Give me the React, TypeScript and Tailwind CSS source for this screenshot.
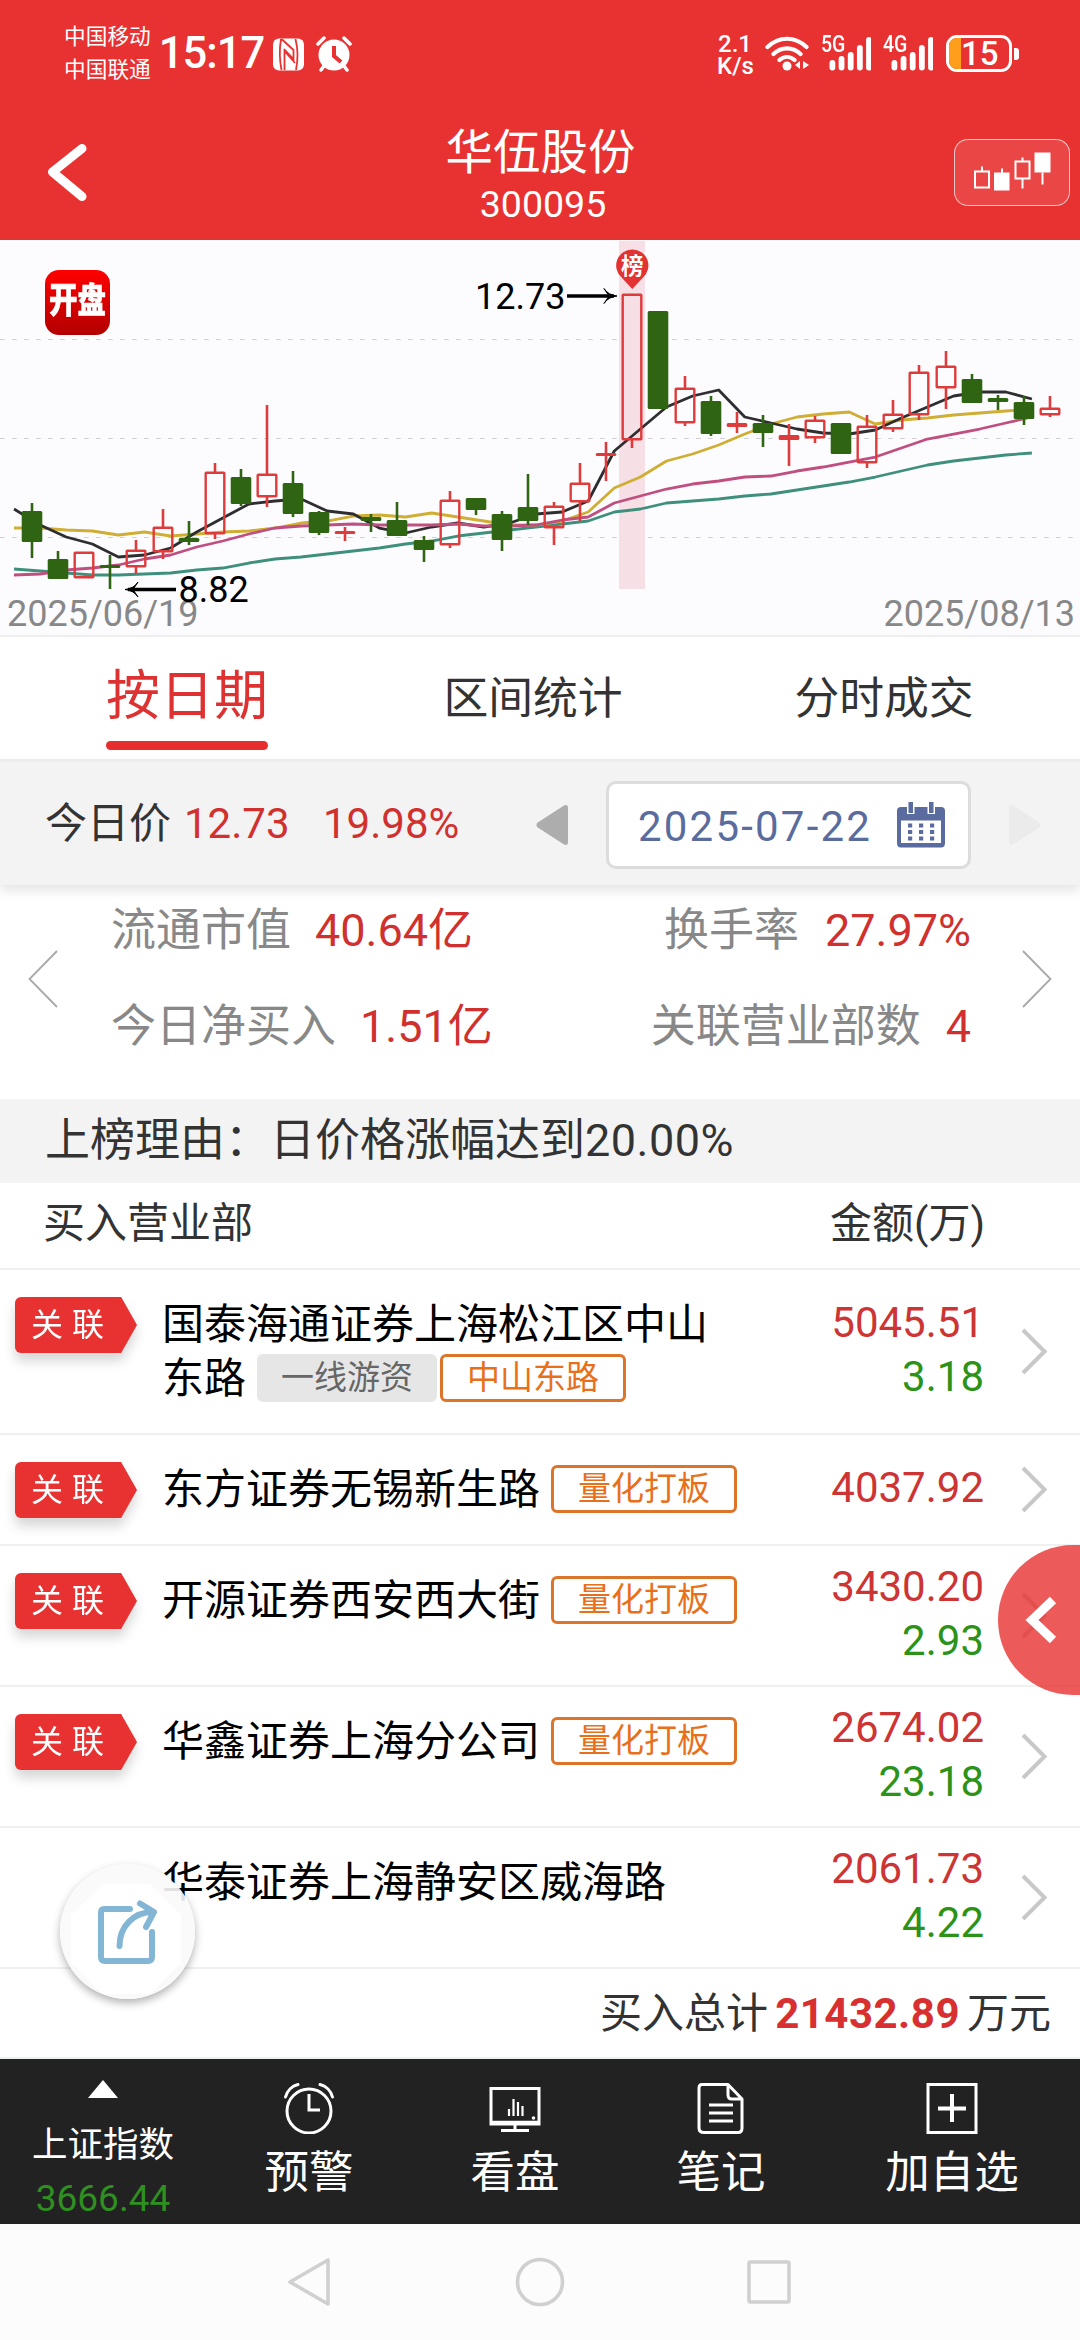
import { clsx } from "clsx";

type Candle = { up: boolean; high: number; top: number; bottom: number; low: number };

const STEP = 26.1;

const c = (side: "r" | "g", high: number, top: number, bottom: number, low: number): Candle => ({
  up: side === "r",
  high,
  top,
  bottom,
  low,
});

const candles: Candle[] = [
  c("g", 503, 511, 542, 558),
  c("g", 551, 559, 579, 579),
  c("r", 552, 552, 578, 578),
  c("g", 555, 565, 568, 589),
  c("r", 540, 550, 567, 573),
  c("r", 509, 527, 552, 559),
  c("g", 521, 538, 542, 545),
  c("r", 463, 472, 534, 539),
  c("g", 469, 477, 504, 506),
  c("r", 405, 474, 497, 507),
  c("g", 471, 483, 514, 517),
  c("g", 511, 512, 533, 535),
  c("r", 527, 531, 534, 541),
  c("g", 514, 517, 521, 532),
  c("g", 502, 520, 536, 536),
  c("g", 536, 540, 550, 562),
  c("r", 491, 500, 545, 548),
  c("g", 498, 498, 510, 515),
  c("g", 511, 514, 540, 551),
  c("g", 474, 507, 521, 525),
  c("r", 502, 506, 528, 545),
  c("r", 463, 483, 502, 521),
  c("r", 442, 453, 456, 481),
  c("r", 294, 294, 440, 448),
  c("g", 311, 311, 409, 409),
  c("r", 376, 388, 423, 426),
  c("g", 396, 401, 434, 436),
  c("r", 412, 423, 427, 433),
  c("g", 415, 423, 433, 447),
  c("r", 424, 435, 440, 466),
  c("r", 416, 420, 438, 443),
  c("g", 423, 423, 454, 454),
  c("r", 415, 426, 463, 468),
  c("r", 400, 414, 429, 432),
  c("r", 365, 372, 415, 420),
  c("r", 351, 366, 388, 409),
  c("g", 374, 379, 403, 403),
  c("g", 395, 398, 402, 410),
  c("g", 396, 402, 419, 425),
  c("r", 396, 408, 415, 417),
];

const averages = [
  {
    color: "#3f8f7d",
    values: [569, 571, 573, 575, 575, 574, 573, 570, 568, 563, 559, 557, 554, 551, 548, 544, 541, 536, 533, 530, 527, 524, 521, 512, 509, 503, 501, 499, 496, 494, 490, 486, 482, 477, 471, 465, 461, 458, 455, 453],
  },
  {
    color: "#cfae33",
    values: [528, 528, 530, 531, 535, 532, 536, 534, 532, 531, 528, 523, 521, 516, 515, 517, 513, 517, 521, 525, 525, 521, 512, 488, 477, 461, 454, 445, 434, 424, 417, 414, 412, 424, 420, 418, 415, 413, 411, 409],
  },
  {
    color: "#2e2e30",
    values: [509, 525, 537, 544, 557, 555, 548, 532, 518, 504, 501, 499, 511, 514, 528, 533, 527, 523, 527, 523, 514, 512, 501, 451, 429, 407, 396, 390, 417, 423, 429, 433, 434, 430, 418, 407, 396, 392, 392, 399],
  },
  {
    color: "#c04f80",
    values: [575, 574, 570, 568, 565, 559, 555, 547, 541, 534, 528, 526, 525, 524, 525, 525, 525, 524, 526, 526, 525, 520, 517, 503, 496, 489, 484, 481, 477, 476, 471, 467, 462, 457, 448, 439, 434, 429, 423, 417],
  },
];

const linePoints = (values: number[]) => values.map((y, i) => `${(14 + i * STEP).toFixed(1)},${y}`).join(" ");

type Seat = {
  linked: boolean;
  name: string;
  tags: { label: string; muted?: boolean }[];
  buy: string;
  sell?: string;
  height: string;
};

const seats: Seat[] = [
  {
    linked: true,
    name: "国泰海通证券上海松江区中山东路",
    tags: [{ label: "一线游资", muted: true }, { label: "中山东路" }],
    buy: "5045.51",
    sell: "3.18",
    height: "h-[165px]",
  },
  { linked: true, name: "东方证券无锡新生路", tags: [{ label: "量化打板" }], buy: "4037.92", height: "h-[111px]" },
  { linked: true, name: "开源证券西安西大街", tags: [{ label: "量化打板" }], buy: "3430.20", sell: "2.93", height: "h-[141px]" },
  { linked: true, name: "华鑫证券上海分公司", tags: [{ label: "量化打板" }], buy: "2674.02", sell: "23.18", height: "h-[141px]" },
  { linked: false, name: "华泰证券上海静安区威海路", tags: [], buy: "2061.73", sell: "4.22", height: "h-[141px]" },
];

const SignalBars = ({ label }: { label: string }) => (
  <div className="relative">
    <span className="absolute -left-px -top-[4px] origin-left scale-x-85 text-[23px] font-medium leading-[28px]">{label}</span>
    <svg width="49" height="36" viewBox="0 0 49 36" fill="#fff">
      {[25, 21, 17, 10, 2].map((y, i) => (
        <rect key={i} x={7.5 + i * 9.15} y={y} width="5.8" height={35.5 - y} rx="2.9" />
      ))}
    </svg>
  </div>
);

const StatusBar = () => (
  <div className="flex h-[108px] items-start justify-between pl-[64px] pr-[61px] pt-[20px] text-white">
    <div className="flex">
      <div className="text-[21.7px] leading-[33px]">
        <p>中国移动</p>
        <p>中国联通</p>
      </div>
      <span className="ml-[8px] mt-[9px] w-[110px] shrink-0 text-[43.500px] font-medium leading-[50px] tracking-[-1px]">15:17</span>
      <svg className="ml-[4px] mt-[18px]" width="31" height="33" viewBox="0 0 31 33">
        <rect x="0" y="0.500" width="31" height="32" rx="6" fill="#fff" />
        <path d="M8 1C6.500 10 6.500 22 8.500 32M11.500 32V13L22 25M8.500 1L20.500 12V21L11 11M23 32C24.800 23 24.800 10 22.500 1" fill="none" stroke="#e83131" strokeWidth="1.800" />
      </svg>
      <svg className="ml-[12px] mt-[16px]" width="36" height="36" viewBox="0 0 36 36">
        <circle cx="18" cy="19" r="15.500" fill="#fff" />
        <path d="M2 8L8 2M34 8L28 2M8 30L5 34M28 30L31 34" stroke="#fff" strokeWidth="3.500" strokeLinecap="round" />
        <path d="M18 10V20L25 26" fill="none" stroke="#e83131" strokeWidth="4" />
      </svg>
    </div>
    <div className="flex items-start">
      <div className="mt-[13px] w-[36px] text-center text-[24px] font-medium leading-[22px]">
        <p>2.1</p>
        <p>K/s</p>
      </div>
      <svg className="ml-[12px] mt-[15px]" width="45" height="36" viewBox="0 0 45 36" fill="none" stroke="#fff" strokeWidth="4.200" strokeLinecap="round">
        <path d="M2.500 12C14 1 30 1 41.500 12M8.500 19C16.500 11.500 27.500 11.500 35.500 19M14.500 25C19 21 25 21 29.500 25" />
        <circle cx="22" cy="31" r="4.500" fill="#fff" stroke="none" />
        <path d="M35 26V34L30 30ZM38 26L44 30L38 34Z" fill="#fff" stroke="none" />
      </svg>
      <div className="ml-[12px] mt-[15px] flex gap-[13px]">
        <SignalBars label="5G" />
        <SignalBars label="4G" />
      </div>
      <div className="ml-[13px] mt-[15px] flex items-center gap-[2px]">
        <div className="flex h-[37px] w-[66px] items-center overflow-hidden rounded-[11px] border-[3px] border-white">
          <span className="h-full w-[12px] bg-[#ff9d1c]" />
          <span className="text-[33px] font-medium leading-[32px]">15</span>
        </div>
        <span className="h-[12px] w-[5px] rounded-r-[3px] bg-white" />
      </div>
    </div>
  </div>
);

const TitleBar = () => (
  <div className="flex h-[132px] items-start justify-between">
    <svg className="ml-[46px] mt-[34px]" width="44" height="60" viewBox="0 0 44 60" fill="none" stroke="#fff" strokeWidth="9" strokeLinecap="round" strokeLinejoin="round">
      <path d="M36 6.500L6.500 30L36 54.500" />
    </svg>
    <div className="ml-[37px] text-center text-white">
      <h1 className="mt-[17px] text-[47.500px] leading-[56px]">华伍股份</h1>
      <p className="pl-[5px] text-[37.500px] leading-[46px]">300095</p>
    </div>
    <div className="mr-[10px] mt-[31px] h-[67px] w-[116px] rounded-[14px] border-[1.500px] border-white/70 bg-white/10">
      <svg width="113" height="64" viewBox="955.500 140.500 113 64" stroke="#fff" strokeWidth="2" fill="none">
        <path d="M975.500 172H989.500V188H975.500ZM982.500 167V172M1002.500 169V174M1016 162H1030V179H1016ZM1023 158V162M1023 179V189M1043 173V185" />
        <path d="M994.500 173H1010V191H994.500ZM1035 153H1051V173H1035Z" fill="#fff" stroke="none" />
      </svg>
    </div>
  </div>
);

const KLineChart = () => (
  <div className="relative h-[397px] border-b-2 border-[#eeeeee] bg-[#fcfcff]">
    <svg width="1080" height="395" viewBox="0 240 1080 395" fill="none">
      {[339.5, 438.5, 537.5].map((y) => (
        <line key={y} x1="0" x2="1074" y1={y} y2={y} stroke="#cfcfd4" strokeDasharray="4.700 7.300" />
      ))}
      <rect x="619" y="241" width="26" height="348" fill="#f6dfe5" />
      {averages.map((line) => (
        <polyline key={line.color} points={linePoints(line.values)} stroke={line.color} strokeWidth="2.800" strokeLinejoin="round" />
      ))}
      {candles.map((k, i) => {
        const x = Math.round(32 + i * STEP);
        const color = k.up ? "#de3c3c" : "#2f6512";
        const thin = k.bottom - k.top < 6;
        return (
          <g key={i} stroke={color}>
            <path d={`M${x} ${k.high}V${k.top}M${x} ${k.bottom}V${k.low}`} strokeWidth="2.600" />
            {k.up && !thin ? (
              <rect x={x - 9.3} y={k.top + 0.7} width="18.600" height={k.bottom - k.top - 1.4} rx="0.500" strokeWidth="2.400" />
            ) : (
              <rect x={x - 10.3} y={k.top} width="20.600" height={k.bottom - k.top} rx="1.500" fill={color} stroke="none" />
            )}
          </g>
        );
      })}
      <path d="M567 296H614M176 589.500H128" stroke="#000" strokeWidth="3.400" />
      <path d="M604 288.500Q608 295 617 296Q608 297 604 303.500L609 296ZM138 582Q134 588.500 125 589.500Q134 590.500 138 597L133 589.500Z" fill="#000" stroke="#000" />
      <path d="M632.300 249.500A16 16 0 0 1 643 277.500L632.300 289L621.600 277.500A16 16 0 0 1 632.300 249.500Z" fill="#e23232" />
      <text x="632.300" y="273.500" textAnchor="middle" fontSize="22.500" fontWeight="700" fill="#fff">榜</text>
      <text x="475" y="308.500" fontSize="36" fill="#000">12.73</text>
      <text x="7" y="626" fontSize="36" fill="#888">2025/06/19</text>
      <text x="1075" y="626" textAnchor="end" fontSize="36" fill="#888">2025/08/13</text>
      <text x="178.500" y="602" fontSize="36" fill="#000">8.82</text>
    </svg>
    <div className="absolute left-[45px] top-[30px] flex size-[65px] items-center justify-center rounded-[14px] bg-gradient-to-b from-[#ff0000] to-[#b30000]">
      <span className="scale-y-125 text-[28.500px] font-black leading-none text-white [-webkit-text-stroke:0.400px_white]">开盘</span>
    </div>
  </div>
);

const Tabs = () => (
  <div className="grid h-[122px] grid-cols-[346px_346px_356px] pl-[14px] text-center text-[44.800px] leading-[60px] text-[#333]">
    <div className="flex flex-col items-center text-[#de3232]">
      <span className="mt-[30px] text-[54px]">按日期</span>
      <span className="mt-[14px] h-[9px] w-[162px] rounded-full bg-[#e62e2e]" />
    </div>
    <span className="mt-[32px]">区间统计</span>
    <span className="mt-[32px]">分时成交</span>
  </div>
);

const DateBar = () => (
  <div className="relative flex h-[126px] items-center border-t-[3px] border-[#ededed] bg-[#f3f3f3] pl-[45px] text-[42px] shadow-[0_6px_10px_rgba(0,0,0,0.10)]">
    <span className="text-[#333]">今日价</span>
    <span className="ml-[13px] w-[139px] text-[#d0312f]">12.73</span>
    <span className="text-[#d0312f]">19.98%</span>
    <svg className="absolute left-[536px] top-[43px]" width="32" height="40" viewBox="0 0 32 40" fill="#adadad">
      <path d="M1 18Q0 20 1 22L28 39.500Q32 41 32 37V3Q32 -1 28 0.500Z" />
    </svg>
    <div className="absolute left-[606px] top-[19px] flex h-[88px] w-[365px] items-center rounded-[10px] border-[3px] border-[#dcdcdc] bg-white pl-[29px] text-[#5a6c9e]">
      <span className="w-[259px] pt-[2px] tracking-[2.200px]">2025-07-22</span>
      <svg width="48" height="46" viewBox="0 0 48 46" fill="#596b9f">
        <path d="M4 5H44Q48 5 48 9V41Q48 45.500 44 45.500H4Q0 45.500 0 41V9Q0 5 4 5Z" />
        <path d="M4 18.500H44V41H4Z" fill="#fff" />
        <path d="M10 0H17.500V12H10ZM30.500 0H38V12H30.500Z" fill="#fff" />
        <path d="M11.500 0H16V11H11.500ZM32 0H36.500V11H32Z" />
        <path d="M11 21.500H15.200V25.500H11ZM22 21.500H26.200V25.500H22ZM33 21.500H37.200V25.500H33ZM11 28H15.200V32H11ZM22 28H26.200V32H22ZM33 28H37.200V32H33ZM11 34.500H15.200V38.500H11ZM22 34.500H26.200V38.500H22ZM33 34.500H37.200V38.500H33Z" />
      </svg>
    </div>
    <svg className="absolute left-[1009px] top-[43px]" width="32" height="40" viewBox="0 0 32 40" fill="#ebebeb">
      <path d="M31 18Q32 20 31 22L4 39.500Q0 41 0 37V3Q0 -1 4 0.500Z" />
    </svg>
  </div>
);

const Stats = () => (
  <div className="flex h-[214px] items-start text-[45px] leading-[60px] text-[#888]">
    <svg className="ml-[28px] mt-[65px]" width="30" height="58" viewBox="0 0 30 58" fill="none" stroke="#a8a8a8" strokeWidth="1.800">
      <path d="M29 1L1.500 29L29 57" />
    </svg>
    <div className="ml-[53px] mt-[16px] flex w-[440px] flex-col gap-[36px]">
      <p>流通市值<span className="ml-[24px] text-[#d0312f]">40.64亿</span></p>
      <p>今日净买入<span className="ml-[24px] text-[#d0312f]">1.51亿</span></p>
    </div>
    <div className="mt-[16px] flex w-[420px] flex-col gap-[36px] text-right">
      <p>换手率<span className="ml-[26px] text-[#d0312f]">27.97%</span></p>
      <p>关联营业部数<span className="ml-[25px] text-[#d0312f]">4</span></p>
    </div>
    <svg className="ml-[51px] mt-[65px]" width="30" height="58" viewBox="0 0 30 58" fill="none" stroke="#a8a8a8" strokeWidth="1.800">
      <path d="M1 1L28.500 29L1 57" />
    </svg>
  </div>
);

const LinkedFlag = () => (
  <div className="drop-shadow-[0_8px_6px_rgba(0,0,0,0.16)]">
    <div className="flex h-[56px] w-[122px] items-center gap-[9px] rounded-[6px] bg-[#e83131] pl-[16px] text-[32px] leading-[54px] text-white [clip-path:polygon(0_0,87%_0,100%_50%,87%_100%,0_100%)]">
      <span>关</span>
      <span>联</span>
    </div>
  </div>
);

const SeatRow = ({ seat }: { seat: Seat }) => (
  <div className={clsx("flex border-b-2 border-[#f0f0f0] text-[42px] leading-[54px]", seat.height)}>
    <div className="ml-[15px] mt-[27px] w-[147px] shrink-0">{seat.linked && <LinkedFlag />}</div>
    <div className="mt-[28px] w-[580px] text-black">
      {seat.name}
      {seat.tags.map((tag, i) => (
        <span
          key={tag.label}
          className={clsx(
            "inline-block h-[48px] rounded-[6px] border-[3px] align-[4px] text-[33px] leading-[42px]",
            i === 0 ? "ml-[11px]" : "ml-[3px]",
            tag.muted ? "border-[#e6e6e6] bg-[#e6e6e6] px-[21px] text-[#666]" : "border-[#dc7429] px-[24px] text-[#e8701a]"
          )}
        >
          {tag.label}
        </span>
      ))}
    </div>
    <div className="flex flex-1 items-center justify-end pb-[2px]">
      <div className="pb-[1px] text-right">
        <p className="text-[#cd3434]">{seat.buy}</p>
        {seat.sell && <p className="text-[#2c9318]">{seat.sell}</p>}
      </div>
      <svg className="ml-[37px] mr-[31px]" width="28" height="46" viewBox="0 0 28 46" fill="none" stroke="#c8c8c8" strokeWidth="4">
        <path d="M2 2L23.500 23.500L2 45" />
      </svg>
    </div>
  </div>
);

const SeatTable = () => (
  <div className="h-[874px]">
    <div className="flex h-[87px] justify-between border-b-2 border-[#f0f0f0] pl-[43px] pr-[95px] pt-[15px] text-[42px] leading-[52px] text-[#333]">
      <span>买入营业部</span>
      <span>金额(万)</span>
    </div>
    {seats.map((seat) => (
      <SeatRow key={seat.name} seat={seat} />
    ))}
    <p className="flex justify-end pr-[29px] pt-[18px] text-[42px] leading-[54px] text-[#333]">
      买入总计
      <span className="mx-[7px] font-bold tracking-[0.500px] text-[#d83030]">21432.89</span>
      万元
    </p>
  </div>
);

const iconProps = { width: 52, height: 52, viewBox: "0 0 52 52", fill: "none", stroke: "#fff", strokeWidth: 3 };

const tools = [
  {
    label: "预警",
    icon: (
      <svg {...iconProps}>
        <circle cx="26" cy="29" r="22" />
        <path d="M26 12V28H37" />
        <path d="M2.500 15C4 9 9 4 15 2.500M37 2.500C43 4 48 9 49.500 15" strokeLinecap="round" />
      </svg>
    ),
  },
  {
    label: "看盘",
    icon: (
      <svg {...iconProps}>
        <path d="M2 6.500H50V42H2ZM26 42V48M12 48.500H40" />
        <path d="M2 40.500H50" strokeWidth="3.500" />
        <path d="M20 34V27M24.500 34V17M29 34V20M33.500 34V24" strokeWidth="2.200" />
        <circle cx="44.500" cy="36" r="1.800" fill="#fff" stroke="none" />
      </svg>
    ),
  },
  {
    label: "笔记",
    icon: (
      <svg {...iconProps} strokeLinejoin="round">
        <path d="M7 2.500H33L47 17V46Q47 50.500 43 50.500H9Q4 50.500 4 46V6Q4 2.500 7 2.500Z" />
        <path d="M33 2.500V13Q33 17 37 17H47M14 23H38M14 31H38M14 39H38" />
      </svg>
    ),
  },
  {
    label: "加自选",
    icon: (
      <svg {...iconProps}>
        <path d="M2 2.500H50V50.500H2Z" />
        <path d="M26 12V40M12 26.500H40" strokeWidth="4" />
      </svg>
    ),
  },
];

const Toolbar = () => (
  <div className="grid h-[167px] grid-cols-[206px_206px_206px_206px_256px] border-t-2 border-[#edf1f0] bg-[#222] text-center text-white">
    <div className="flex flex-col items-center">
      <svg className="mt-[21px]" width="30" height="18" viewBox="0 0 30 18" fill="#fff">
        <path d="M15 0L30 18H0Z" />
      </svg>
      <span className="mt-[24px] text-[35.500px] leading-[46px]">上证指数</span>
      <span className="mt-[7px] text-[37px] leading-[48px] text-[#2f8f20]">3666.44</span>
    </div>
    {tools.map((tool) => (
      <div key={tool.label} className="flex flex-col items-center pt-[23px] text-[44.500px] leading-[56px]">
        {tool.icon}
        <span className="mt-[11px]">{tool.label}</span>
      </div>
    ))}
  </div>
);

const SystemNav = () => (
  <div className="h-[116px] bg-[#fcfcfc]">
    <svg width="1080" height="116" viewBox="0 2224 1080 116" fill="none" stroke="#d0d0d0" strokeWidth="3.600" strokeLinejoin="round">
      <path d="M290 2282L328 2260V2304Z" />
      <circle cx="540" cy="2282" r="22.500" />
      <rect x="749" y="2262" width="40" height="40" rx="1.500" />
    </svg>
  </div>
);

export default function App() {
  return (
    <div className="relative h-[2340px] w-[1080px] overflow-hidden bg-white font-['Roboto','Noto_Sans_CJK_SC',sans-serif]">
      <header className="bg-[#e83131]">
        <StatusBar />
        <TitleBar />
      </header>
      <KLineChart />
      <Tabs />
      <DateBar />
      <Stats />
      <p className="h-[84px] bg-[#f3f3f3] pl-[45px] text-[45px] leading-[83px] text-[#333]">
        上榜理由：日价格涨幅达到<span className="tracking-[0.500px]">20.00%</span>
      </p>
      <SeatTable />
      <Toolbar />
      <SystemNav />

      {/* Floating share button */}
      <div className="absolute left-[60px] top-[1864px] size-[135px] rounded-full bg-[#fafafa]/90 shadow-[0_4px_8px_rgba(0,0,0,0.3)]">
        <svg width="135" height="135" viewBox="60 1863 135 135" fill="none">
          <path d="M103 1883H150L181 1914V1962L150 1993H103L71 1962V1914Z" fill="#fff" />
          <path d="M130 1908H104Q101 1908 101 1912V1956Q101 1960 105 1960H148Q152 1960 152 1956V1931" stroke="#82b6d4" strokeWidth="6" strokeLinecap="round" />
          <path d="M119.500 1945C119.500 1926 133 1911 153 1911M140 1902.500L154 1911L146 1926" stroke="#82b6d4" strokeWidth="6" strokeLinecap="round" strokeLinejoin="round" />
        </svg>
      </div>

      {/* Drawer handle on the right edge */}
      <div className="absolute left-[998px] top-[1545px] h-[150px] w-[82px] overflow-hidden rounded-l-[75px] bg-[#e83131]/80">
        <svg width="82" height="150" viewBox="0 0 82 150" fill="none" stroke="#fff" strokeWidth="9">
          <path d="M55 55L34 75L55 95" />
        </svg>
      </div>
    </div>
  );
}
